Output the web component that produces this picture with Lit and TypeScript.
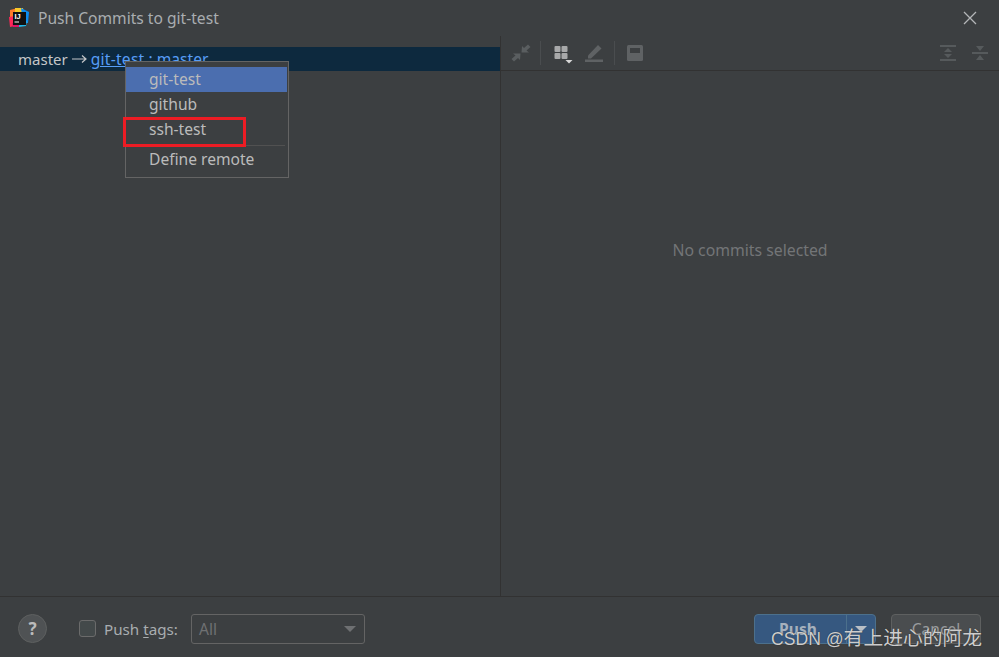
import { LitElement, html, css, svg } from "lit";
import { customElement } from "lit/decorators.js";

@customElement("app-root")
export class AppRoot extends LitElement {
  static styles = css`
    :host { display: block; width: 999px; height: 657px; overflow: hidden; }
    * { box-sizing: border-box; }
    .win { position: relative; width: 999px; height: 657px; display: flex; flex-direction: column; background: #3c3f41; color: #bbbbbb; font-family: "Noto Sans", "Open Sans", sans-serif; font-size: 15.6px; }
    .title { height: 36px; flex: none; display: flex; align-items: center; padding: 0 22px 0 9px; gap: 9px; color: #a9adb0; }
    .title .t { flex: 1; }
    .logo, .x { display: block; flex: none; }
    .main { flex: 1; display: flex; min-height: 0; }
    .left { width: 501px; flex: none; padding-top: 11px; border-right: 1px solid #323232; }
    .row { height: 24px; background: #0d293e; padding-left: 18px; display: flex; align-items: center; color: #c4c6c8; white-space: pre; }
    .master { font-size: 15px; }
    .arrow { display: block; margin: 0 4px 0 4px; flex: none; }
    .link { color: #589df6; text-decoration: underline; letter-spacing: 0.25px; }
    .link2 { color: #589df6; }
    .right { flex: 1; display: flex; flex-direction: column; }
    .tools { height: 35px; flex: none; border-bottom: 1px solid #323232; display: flex; align-items: center; padding: 0 10px; }
    .tools svg { display: block; flex: none; }
    .sep { width: 1px; height: 24px; background: #4a4d4f; flex: none; }
    .spacer { flex: 1; }
    .empty { flex: 1; display: flex; justify-content: center; color: #737577; padding-top: 168px; font-size: 15.8px; }
    .foot { height: 61px; flex: none; border-top: 1px solid #323232; display: flex; align-items: center; padding: 3px 18px 0 18px; }
    .help { width: 29px; height: 29px; border-radius: 50%; background: #4f5254; border: 1px solid #5e6060; color: #bbbbbb; font-weight: 700; font-size: 17px; display: flex; align-items: center; justify-content: center; margin-right: 32px; flex: none; }
    .check { width: 17px; height: 17px; border: 1px solid #6b6b6b; border-radius: 3px; background: #43494a; margin-right: 8px; flex: none; }
    .lbl { color: #a9adb0; margin-right: 14px; font-size: 15.2px; width: 73px; white-space: nowrap; }
    .lbl u { text-underline-offset: 2px; }
    .combo { width: 174px; height: 30px; border: 1px solid #646464; border-radius: 3px; display: flex; align-items: center; justify-content: space-between; padding: 0 8px 0 7px; color: #6f7173; flex: none; }
    .tri { display: block; width: 0; height: 0; border-left: 6px solid transparent; border-right: 6px solid transparent; border-top: 6px solid #6e7072; }
    .btn { height: 30px; border-radius: 4px; display: flex; align-items: center; justify-content: center; flex: none; font-weight: 700; }
    .push { width: 122px; background: #365880; border: 1px solid #4c708c; color: #a6b0bc; margin-right: 15px; justify-content: flex-start; }
    .push .a { width: 92px; padding-right: 5px; text-align: center; line-height: 28px; border-right: 1px solid #4c708c; }
    .push .b { flex: 1; display: flex; justify-content: center; }
    .push .tri { border-top-color: #b9bfc6; }
    .cancel { width: 90px; background: #4a4d4f; border: 1px solid #5e6060; color: #999b9d; font-weight: 400; }
    .menu { position: absolute; left: 125px; top: 61px; width: 164px; height: 117px; background: #3c3f41; border: 1px solid #646464; padding-top: 5px; }
    .it { height: 25px; padding: 0 0 2px 23px; display: flex; align-items: center; color: #bbbbbb; }
    .it.sel { background: #4b6eaf; margin-right: 1px; }
    .msep { height: 1px; background: #515151; margin: 3px 3px 0 0; }
    .msep + .it { margin-top: 1px; }
    .red { position: absolute; left: 123px; top: 117px; width: 123px; height: 30px; border: 3px solid #ed1c24; }
    .wm { position: absolute; left: 771px; top: 622px; font-size: 17.6px; color: #cdcdcd; white-space: nowrap; font-family: "Liberation Sans", "Noto Sans CJK SC", sans-serif; text-shadow: 0 0 1px #222; }
    .wm span { font-size: 19.8px; }
  `;

  logo() {
    return svg`<svg class="logo" width="20" height="20" viewBox="0 0 20 20">
      <path d="M1 2 L9 0 L9 8 L1 11Z" fill="#fe7a29"/>
      <path d="M0 9 L6 8 L6 18 L1 19Z" fill="#fe2857"/>
      <path d="M6 0 L14 0 L15 5 L6 5Z" fill="#f8c82a"/>
      <path d="M12 0 L20 4 L19 15 L14 15Z" fill="#0d8cf0"/>
      <path d="M9 16 L18 13 L17 18 L10 19Z" fill="#20b5e8"/>
      <path d="M3 15 L10 15 L10 19 L4 19Z" fill="#dd1265"/>
      <rect x="4" y="4" width="13" height="13" fill="#111"/>
      <text x="5.5" y="11" font-size="7.5" font-weight="700" fill="#fff" font-family="Liberation Sans">IJ</text>
      <rect x="5.5" y="13.5" width="4.5" height="1" fill="#fff"/>
    </svg>`;
  }

  render() {
    return html`<div class="win">
      <div class="title">
        ${this.logo()}
        <div class="t">Push Commits to git-test</div>
        <svg class="x" width="14" height="14" viewBox="0 0 14 14"><path d="M1 1 L13 13 M13 1 L1 13" stroke="#b4b6b8" stroke-width="1.3" fill="none"/></svg>
      </div>
      <div class="main">
        <div class="left">
          <div class="row"><span class="master">master</span><svg class="arrow" width="15" height="10" viewBox="0 0 15 10"><path d="M0 5 H14 M10 1.5 L14 5 L10 8.5" stroke="#c4c6c8" stroke-width="1.2" fill="none"/></svg><span class="link">git-test</span><span class="link2"> : master</span></div>
        </div>
        <div class="right">
          <div class="tools">
            <svg width="20" height="20" viewBox="0 0 20 20" fill="#5a5e60"><path d="M10.5 9.5 L11 3 L13 5 L17 1.5 L19.5 4 L15.5 7.5 L18 9.5Z"/><path d="M9.5 10.5 L9 17 L7 15 L3 18.5 L0.5 16 L4.5 12.5 L2 10.5Z"/></svg>
            <div class="sep" style="margin:0 13px 0 9px"></div>
            <svg width="20" height="22" viewBox="0 0 20 22"><g fill="#a8a9aa"><rect x="0.5" y="4" width="6" height="6" rx="1"/><rect x="7.5" y="4" width="6" height="6" rx="1"/><rect x="0.5" y="11" width="6" height="6" rx="1"/><rect x="7.5" y="11" width="6" height="6" rx="1"/></g><path d="M11.5 18 L18.5 18 L15 21.5Z" fill="#d8d8d8"/></svg>
            <svg style="margin-left:10px" width="20" height="20" viewBox="0 0 20 20" fill="#5f6264"><path d="M4 12.5 L14 2 L17.5 5.5 L7 15.5 L4 15.5Z"/><rect x="1" y="16.5" width="18" height="2.5"/></svg>
            <div class="sep" style="margin:0 12px 0 10px"></div>
            <svg width="16" height="16" viewBox="0 0 16 16"><rect x="0" y="0" width="16" height="16" rx="1.5" fill="#5f6264"/><rect x="3" y="3" width="10" height="5" fill="#3c3f41"/></svg>
            <div class="spacer"></div>
            <svg width="18" height="20" viewBox="0 0 18 20" fill="#565a5c"><rect x="1" y="2" width="16" height="2"/><rect x="1" y="16" width="16" height="2"/><path d="M9 5 L13 9 L5 9Z M9 15 L13 11 L5 11Z"/></svg>
            <svg style="margin-left:14px" width="18" height="20" viewBox="0 0 18 20" fill="#565a5c"><rect x="1" y="9" width="16" height="2"/><path d="M9 8 L5 3 L13 3Z M9 12 L5 17 L13 17Z"/></svg>
          </div>
          <div class="empty">No commits selected</div>
        </div>
      </div>
      <div class="foot">
        <div class="help">?</div>
        <div class="check"></div>
        <div class="lbl">Push <u>t</u>ags:</div>
        <div class="combo"><span>All</span><span class="tri"></span></div>
        <div class="spacer"></div>
        <div class="btn push"><div class="a">Push</div><div class="b"><span class="tri"></span></div></div>
        <div class="btn cancel">Cancel</div>
      </div>
      <div class="menu">
        <div class="it sel">git-test</div>
        <div class="it">github</div>
        <div class="it">ssh-test</div>
        <div class="msep"></div>
        <div class="it">Define remote</div>
      </div>
      <div class="red"></div>
      <div class="wm">CSDN @<span>有上进心的阿龙</span></div>
    </div>`;
  }
}
